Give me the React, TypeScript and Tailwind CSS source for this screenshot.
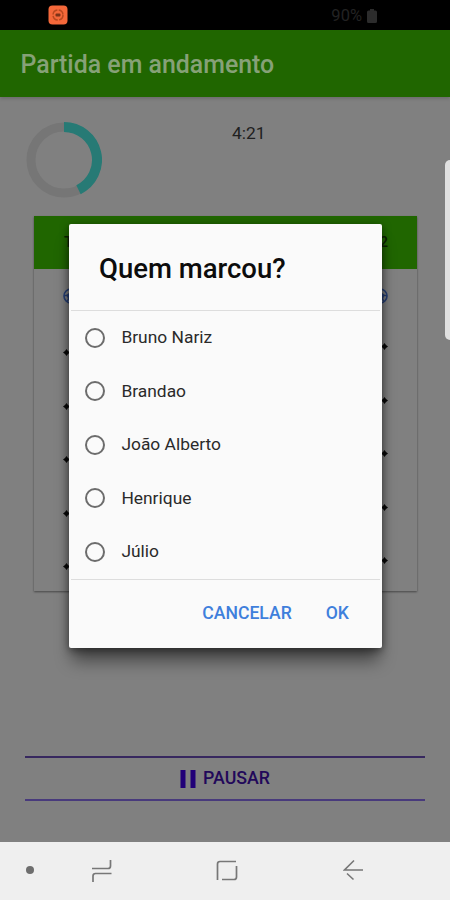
const players = ['Bruno Nariz', 'Brandao', 'João Alberto', 'Henrique', 'Júlio']

function StatusBar() {
  return (
    <div className="h-[30px] shrink-0 bg-black flex items-start justify-between pl-[48px] pr-[73px]">
      <svg className="mt-[5px] w-5 h-5" viewBox="0 0 20 20" fill="none">
        <rect x="0.5" y="0.5" width="19" height="19" rx="4" fill="#f4683a" />
        <circle cx="10" cy="10" r="5" stroke="#b8481f" strokeWidth="1.5" strokeDasharray="6.5 1.4" />
        <rect x="7.5" y="8.5" width="5" height="3" rx="1" fill="#7c3319" />
      </svg>
      <div className="mt-[5px] flex items-center gap-[5px] text-[#232323]">
        <span className="text-[16.5px] leading-[21px]">90%</span>
        <svg className="w-[10px] h-[14px]" viewBox="0 0 10 14" fill="#2c2c2c">
          <path d="M3 0h4v1.5h1.5q1.5 0 1.5 1.5v9.500q0 1.500-1.500 1.500h-7Q0 14 0 12.500V3q0-1.500 1.500-1.500H3z" />
        </svg>
      </div>
    </div>
  )
}

function Progress() {
  return (
    <svg className="w-[76px] h-[76px]" viewBox="0 0 76 76" fill="none">
      <circle cx="38" cy="38" r="33" stroke="#767676" strokeWidth="9" />
      <path d="M38 5A33 33 0 0 1 52.500 67.650" stroke="#277a75" strokeWidth="10" />
    </svg>
  )
}

function BallIcon() {
  return (
    <svg className="w-4 h-4" viewBox="0 0 16 16" fill="none" stroke="#263f75" strokeWidth="1.600">
      <circle cx="8" cy="8" r="7" />
      <path d="M8 4.500l3.500 2.600-1.300 4H5.800l-1.300-4z" fill="#263f75" />
      <path d="M8 1v3.500M1 7.500h3.500M15 7.500h-3.500M5.800 11l-2 2.600M10.200 11l2 2.600" />
    </svg>
  )
}

function TeamColumn({ name, right = false }: { name: string; right?: boolean }) {
  return (
    <div className={`flex-1 flex flex-col ${right ? 'items-end' : 'items-start'}`}>
      <div className={`h-[53px] shrink-0 w-full bg-[#206600] flex items-center text-[#0b2003] text-[15px] font-medium ${right ? 'justify-end pr-[29px]' : 'pl-[30px]'}`}>
        {name}
      </div>
      <div className={`h-[53px] mb-px shrink-0 flex items-center ${right ? 'pr-[29px]' : 'pl-[29px]'}`}>
        <BallIcon />
      </div>
      <div className={right ? 'pr-[29px] -mt-[3px]' : 'pl-[29px] mt-[3px]'}>
        {players.map((player) => (
          <div key={player} className="h-[53.5px] flex items-center">
            <svg className="w-[7px] h-[7px]" viewBox="0 0 7 7" fill="#080808">
              <path d="M3.500 0 5 2 7 3.500 5 5 3.500 7 2 5 0 3.500 2 2z" />
            </svg>
          </div>
        ))}
      </div>
    </div>
  )
}

function GoalDialog() {
  return (
    <div className="absolute left-[69px] top-[224px] w-[313px] h-[424px] rounded-[2px] bg-[#fafafa] flex flex-col shadow-[0_16px_16px_-3px_rgba(0,0,0,0.45),0_2px_8px_rgba(0,0,0,0.5)]">
      <h2 className="h-[86px] shrink-0 pl-[30px] pt-[4px] flex items-center text-[27.5px] font-medium text-[#0c0c0c] whitespace-nowrap">
        Quem marcou?
      </h2>
      <div className="h-[270px] shrink-0 mx-[2px] border-y border-[#dddddd]">
        {players.map((player) => (
          <label key={player} className="h-[53.5px] flex items-center pl-[14.4px] gap-4 text-[17.4px] text-[#2a2a2a]">
            <input type="radio" name="scorer" className="appearance-none w-5 h-5 rounded-full border-2 border-[#6c6c6c]" />
            <span className="whitespace-nowrap pb-px">{player}</span>
          </label>
        ))}
      </div>
      <div className="flex-1 flex justify-end items-center gap-[34px] pr-[33px] pb-[2px] text-[17.6px] font-medium text-[#3f7fdc]">
        <button>CANCELAR</button>
        <button>OK</button>
      </div>
    </div>
  )
}

function NavBar() {
  return (
    <div className="h-[58px] shrink-0 bg-[#efefef] flex items-center pl-[26px] text-[#777777]">
      <div className="w-[8px] h-[8px] mr-px -mt-[2px] rounded-full bg-[#6e6e6e]" />
      <svg className="ml-[56px] -mt-[1px] w-[22px] h-[24px]" viewBox="0 0 22 24" fill="none" stroke="currentColor" strokeWidth="1.700">
        <path d="M1 9.500h16q2.500 0 2.500-2.500V1M20.500 14.500h-16q-2.500 0-2.500 2.500v6" />
      </svg>
      <svg className="ml-[103px] w-[22px] h-[22px]" viewBox="0 0 22 22" fill="none" stroke="currentColor" strokeWidth="1.700">
        <path d="M1.500 20V4q0-2.500 2.500-2.500H20M20.500 6v11q0 2.500-2.500 2.500H6" />
      </svg>
      <svg className="ml-[105px] -mt-[2px] w-[20px] h-[22px]" viewBox="0 0 20 22" fill="none" stroke="currentColor" strokeWidth="1.600">
        <path d="M20 11H1.500L11 1.500M4 14.500l6.500 6" />
      </svg>
    </div>
  )
}

export default function App() {
  return (
    <div className="relative w-[450px] h-[900px] overflow-hidden flex flex-col bg-[#808080] font-['Roboto',sans-serif]">
      <StatusBar />
      <header className="h-[67px] shrink-0 bg-[#206600] pl-[20.5px] pt-[2px] flex items-center text-[#86a177] text-[24.9px] font-medium shadow-[0_2px_3px_rgba(0,0,0,0.15)]">
        Partida em andamento
      </header>
      <main className="flex-1 flex flex-col">
        <div className="h-[119px] shrink-0 flex items-start">
          <div className="ml-[26px] mt-[25px]">
            <Progress />
          </div>
          <span className="ml-[130px] mt-[24px] text-[17.4px] leading-6 text-[#202020]">4:21</span>
        </div>
        <section className="ml-[34px] w-[383px] h-[375px] shrink-0 flex shadow-[0_1px_2px_rgba(0,0,0,0.45)]">
          <TeamColumn name="Time 1" />
          <TeamColumn name="Time 2" right />
        </section>
        <button className="mt-[165px] mx-[25px] h-[45px] border-y-2 border-t-[#37285f] border-b-[#483a7c] flex items-center justify-center gap-[7px] text-[#22085a] text-[17.8px] font-medium">
          <svg className="w-4 h-[18px]" viewBox="0 0 16 18" fill="#210078">
            <path d="M0.500 0h5v18h-5zM10.500 0h5v18h-5z" />
          </svg>
          PAUSAR
        </button>
      </main>
      <NavBar />
      <GoalDialog />
      <div className="absolute right-0 top-[160px] w-[5px] h-[180px] rounded-l-[5px] bg-[#e0e0e0]" />
    </div>
  )
}
